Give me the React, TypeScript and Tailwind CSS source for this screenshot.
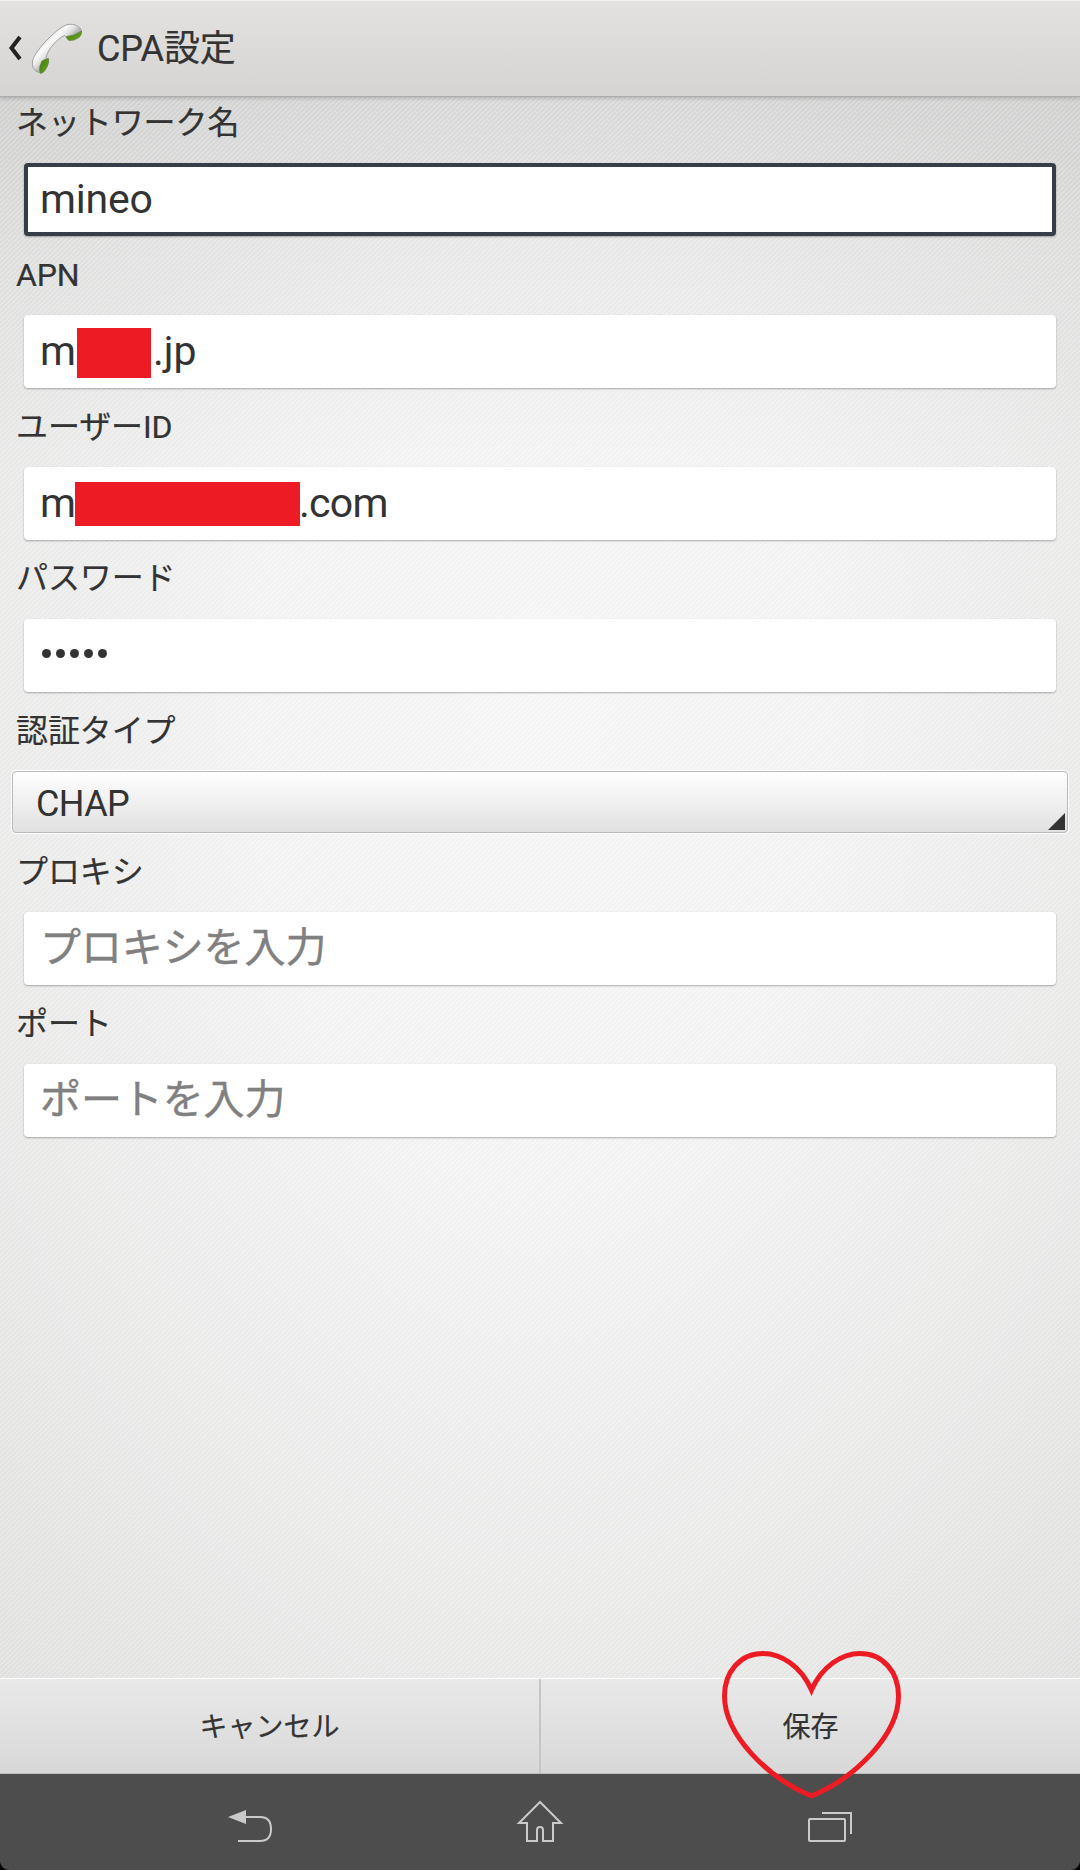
import React from "react";

function Label({ children }: { children: string }) {
  return (
    <div className="flex h-[56px] items-center pl-4 text-[32px] leading-none tracking-[-0.1px] whitespace-pre [-webkit-text-stroke:0.2px_#333]">
      <span>{children}</span>
    </div>
  );
}

function Field({ children, focused, hint }: { children: React.ReactNode; focused?: boolean; hint?: boolean }) {
  return (
    <div
      className={`mx-6 flex h-[73px] items-center rounded-[4px] bg-white text-[41px] leading-none whitespace-pre ${
        focused
          ? "border-4 border-[#373e47] pl-3 tracking-[-0.2px] shadow-[0_1px_2px_rgba(0,0,0,0.3)]"
          : "pl-4 shadow-[0_1px_2px_rgba(0,0,0,0.3)]"
      } ${hint ? "tracking-[-0.1px] text-[#808080] [-webkit-text-stroke:0.4px_#808080]" : ""}`}
    >
      {children}
    </div>
  );
}

function PhoneIcon() {
  return (
    <svg className="ml-[6px] h-[60px] w-[60px]" viewBox="0 0 60 60">
      <defs>
        <linearGradient id="body" gradientUnits="userSpaceOnUse" x1="16" y1="16" x2="31" y2="31">
          <stop offset="0" stopColor="#d0d0d0" />
          <stop offset="0.45" stopColor="#fbfbfb" />
          <stop offset="0.75" stopColor="#e2e2e2" />
          <stop offset="1" stopColor="#b5b5b5" />
        </linearGradient>
        <linearGradient id="green" x1="0" y1="0" x2="1" y2="1">
          <stop offset="0" stopColor="#3f7a00" />
          <stop offset="1" stopColor="#6dab22" />
        </linearGradient>
      </defs>
      <path
        d="M4.500 42C6 36 12 28 20 20C28 12 34 7 40 5.500C46 4.500 52 7 53.500 12C52 16 45 18.500 39 18.500Q37 17.500 36.500 16.500C29 20 20 30 18 38.500L20 40Q14 43 12.500 54Q7 53 5 48.500Q4 45 4.500 42Z"
        fill="url(#body)"
        stroke="#999"
        strokeWidth="0.9"
      />
      <path d="M38.500 17.500Q46 17 53.500 12Q54 15.500 51 18.500Q46 22 41 21.500Q38.500 20 38.500 17.500Z" fill="url(#green)" stroke="#5d7f42" strokeWidth="0.7" />
      <path d="M14 42Q17 40 20.500 39.500Q21.500 43 19 48Q16 54 12.500 54.500Q11 52 12 47Z" fill="url(#green)" stroke="#5d7f42" strokeWidth="0.7" />
    </svg>
  );
}

export default function App() {
  return (
    <div className="relative flex h-[1870px] w-[1080px] flex-col overflow-hidden bg-[linear-gradient(to_bottom,rgba(0,0,0,0.1)_90px,rgba(0,0,0,0.045)_240px,transparent_480px),radial-gradient(ellipse_1000px_1650px_at_540px_720px,#f8f8f8_0%,#f4f4f4_30%,#e6e6e5_72%,#dadada_100%)] font-[Roboto,'Noto_Sans_CJK_JP',sans-serif] text-[#333]">
      <header className="relative z-10 flex h-[97px] shrink-0 items-center border-t border-b border-t-[#f2f2f0] border-b-[#adadac] bg-linear-to-b from-[#e3e2e0] to-[#d5d4d2] shadow-[0_1px_4px_rgba(0,0,0,0.22)]">
        <svg className="ml-2 h-[28px] w-[14px]" viewBox="0 0 14 28" fill="none" stroke="#222" strokeWidth="4">
          <path d="M12 2 L3.5 13 L12 24" />
        </svg>
        <PhoneIcon />
        <h1 className="ml-[9px] text-[36px] leading-none tracking-[-0.1px] whitespace-pre [-webkit-text-stroke:0.2px_#333]">CPA設定</h1>
      </header>

      <main className="flex-1 bg-[linear-gradient(135deg,rgba(0,0,0,0.01)_25%,rgba(255,255,255,0.16)_25%,rgba(255,255,255,0.16)_50%,rgba(0,0,0,0.01)_50%,rgba(0,0,0,0.01)_75%,rgba(255,255,255,0.16)_75%)] bg-[size:5px_5px]">
        <div className="-mt-[2px] pb-3"><Label>ネットワーク名</Label></div>
        <Field focused>mineo</Field>
        <div className="pt-[11px] pb-3"><Label>APN</Label></div>
        <Field>
          m<span className="relative top-px mr-[2px] ml-px h-[50px] w-[74px] bg-[#ed1c24]" />.jp
        </Field>
        <div className="pt-[11px] pb-3"><Label>ユーザーID</Label></div>
        <Field>
          m<span className="-ml-px h-[44px] w-[225px] bg-[#ed1c24]" />
          <span className="-ml-px tracking-[-0.7px]">.com</span>
        </Field>
        <div className="pt-[10px] pb-[13px]"><Label>パスワード</Label></div>
        <Field>
          <span className="flex gap-[5px] pl-[2px] pb-1">
            {[0, 1, 2, 3, 4].map((i) => (
              <i key={i} className="size-[9px] rounded-full bg-[#333]" />
            ))}
          </span>
        </Field>
        <div className="pt-[11px] pb-3"><Label>認証タイプ</Label></div>
        <div className="relative mx-3 flex h-[62px] items-center rounded-[4px] border border-[#b9b9b9] bg-linear-to-b from-white to-[#e1e1e1] pt-1 pl-[23px] text-[36px] leading-none tracking-[-0.6px] shadow-[0_0_0_1px_#fff]">
          CHAP
          <svg className="absolute right-[2px] bottom-[2px] size-[17px]" viewBox="0 0 17 17">
            <path d="M17 0V17H0Z" fill="#333" />
          </svg>
        </div>
        <div className="pt-[11px] pb-3"><Label>プロキシ</Label></div>
        <Field hint>プロキシを入力</Field>
        <div className="pt-[11px] pb-3"><Label>ポート</Label></div>
        <Field hint>ポートを入力</Field>
      </main>

      <div className="flex h-[96px] shrink-0 border-t border-b border-t-white border-b-[#bebebe] bg-linear-to-b from-[#e9e9e9] to-[#d8d8d8] text-[28px] leading-none [-webkit-text-stroke:0.2px_#333]">
        <div className="flex w-[541px] items-center justify-center border-r-2 border-[#c5c5c5] pt-1">キャンセル</div>
        <div className="flex flex-1 items-center justify-center pt-1">保存</div>
      </div>

      <div className="h-[96px] shrink-0 bg-black">
        <nav className="h-full rounded-b-[9px] bg-[#4d4d4d]">
          <svg width="1080" height="96" viewBox="0 1774 1080 96" fill="none" stroke="#cacaca" strokeWidth="2">
            <path d="M245 1817H260Q271 1817 271 1829Q271 1841 260 1841H238" />
            <path d="M228 1817L246 1810V1824Z" fill="#cacaca" stroke="none" />
            <path d="M540 1802L519 1823H527V1841H537V1830Q537 1827 540 1827Q543 1827 543 1830V1841H553V1823H561Z" />
            <rect x="809" y="1819" width="36" height="22" rx="1" />
            <path d="M822 1813H851V1834" />
          </svg>
        </nav>
      </div>

      <svg className="pointer-events-none absolute top-[1640px] left-[710px] h-[170px] w-[200px]" viewBox="710 1640 200 170" fill="none" stroke="#ed1c24" strokeWidth="5">
        <path d="M811.5 1690C801 1666 781 1653.500 763 1653.500C740 1653.500 724.5 1672 724.5 1696C724.5 1735 768 1778 811.5 1796C855 1778 898.5 1735 898.5 1696C898.5 1672 883 1653.500 860 1653.500C842 1653.500 822 1666 811.5 1690Z" />
      </svg>
    </div>
  );
}
